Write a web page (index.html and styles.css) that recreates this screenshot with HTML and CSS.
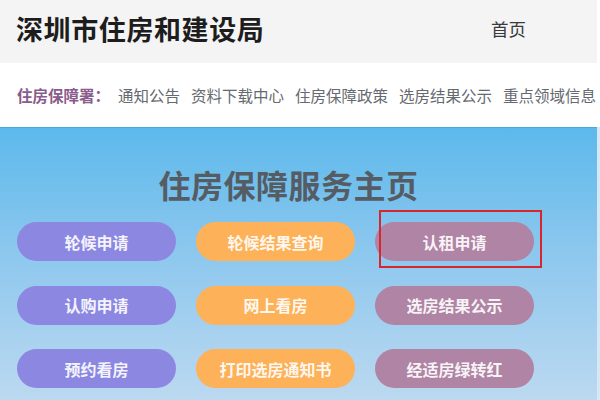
FILE: index.html
```html
<!DOCTYPE html>
<html lang="zh">
<head>
<meta charset="utf-8">
<link rel="stylesheet" href="styles.css">
</head>
<body>
<div class="page">
  <header class="top">
    <h1 class="site-title">深圳市住房和建设局</h1>
    <a class="home-link">首页</a>
  </header>
  <nav class="subnav">
    <span class="subnav-label">住房保障署：</span>
    <a>通知公告</a>
    <a>资料下载中心</a>
    <a>住房保障政策</a>
    <a>选房结果公示</a>
    <a>重点领域信息</a>
  </nav>
  <main class="hero">
    <h2 class="hero-title">住房保障服务主页</h2>
    <div class="grid">
      <div class="btn purple">轮候申请</div>
      <div class="btn orange">轮候结果查询</div>
      <div class="btn mauve">认租申请<span class="mark"></span></div>
      <div class="btn purple">认购申请</div>
      <div class="btn orange">网上看房</div>
      <div class="btn mauve">选房结果公示</div>
      <div class="btn purple">预约看房</div>
      <div class="btn orange">打印选房通知书</div>
      <div class="btn mauve">经适房绿转红</div>
    </div>
  </main>
</div>
</body>
</html>
```
FILE: styles.css
```css
* { box-sizing: border-box; }
html, body { margin: 0; padding: 0; }
body {
  width: 600px;
  height: 400px;
  overflow: hidden;
  background: #ffffff;
  font-family: "Noto Sans CJK SC", "Noto Sans", sans-serif;
}
.page { width: 600px; }
.top {
  width: 597px;
  height: 63px;
  background: #f4f4f4;
  display: flex;
  align-items: center;
  justify-content: space-between;
  padding: 0 71px 6px 16px;
}
.site-title {
  margin: 0;
  font-size: 27px;
  font-weight: 700;
  color: #1d1d1d;
  letter-spacing: 0.6px;
  line-height: 1;
}
.home-link {
  font-size: 17.5px;
  color: #3a3a3a;
}
.subnav {
  height: 64px;
  display: flex;
  align-items: center;
  gap: 11px;
  padding: 0 0 0 17px;
  white-space: nowrap;
  overflow: hidden;
  font-size: 15.5px;
  color: #666a70;
}
.subnav-label {
  color: #8a5b8c;
  font-weight: 700;
  margin-right: -3px;
}
.hero {
  height: 273px;
  width: 597px;
  border-top: 1px solid #4aa8de;
  background: linear-gradient(180deg, #5cb9ec 0%, #8cc7ee 45%, #bcd9f0 100%);
  padding-top: 36px;
  box-shadow: 3px 0 0 #d6e8f6;
}
.hero-title {
  margin: 0;
  text-align: center;
  font-size: 32px;
  line-height: 40px;
  font-weight: 700;
  color: #565c64;
  letter-spacing: 0.5px;
  padding-right: 20px;
}
.grid {
  margin-top: 18px;
  padding-left: 17px;
  display: grid;
  grid-template-columns: 159px 159px 159px;
  column-gap: 20px;
  row-gap: 24.5px;
}
.btn {
  position: relative;
  height: 39px;
  border-radius: 20px;
  display: flex;
  align-items: center;
  justify-content: center;
  font-size: 16px;
  font-weight: 700;
  color: rgba(255, 255, 255, 0.92);
}
.purple { background: #8c88e2; }
.orange { background: #fdb158; }
.mauve { background: #b084a4; }
.mark {
  position: absolute;
  left: 4px;
  top: -12px;
  width: 163px;
  height: 58px;
  border: 2px solid #d8262c;
}
```
